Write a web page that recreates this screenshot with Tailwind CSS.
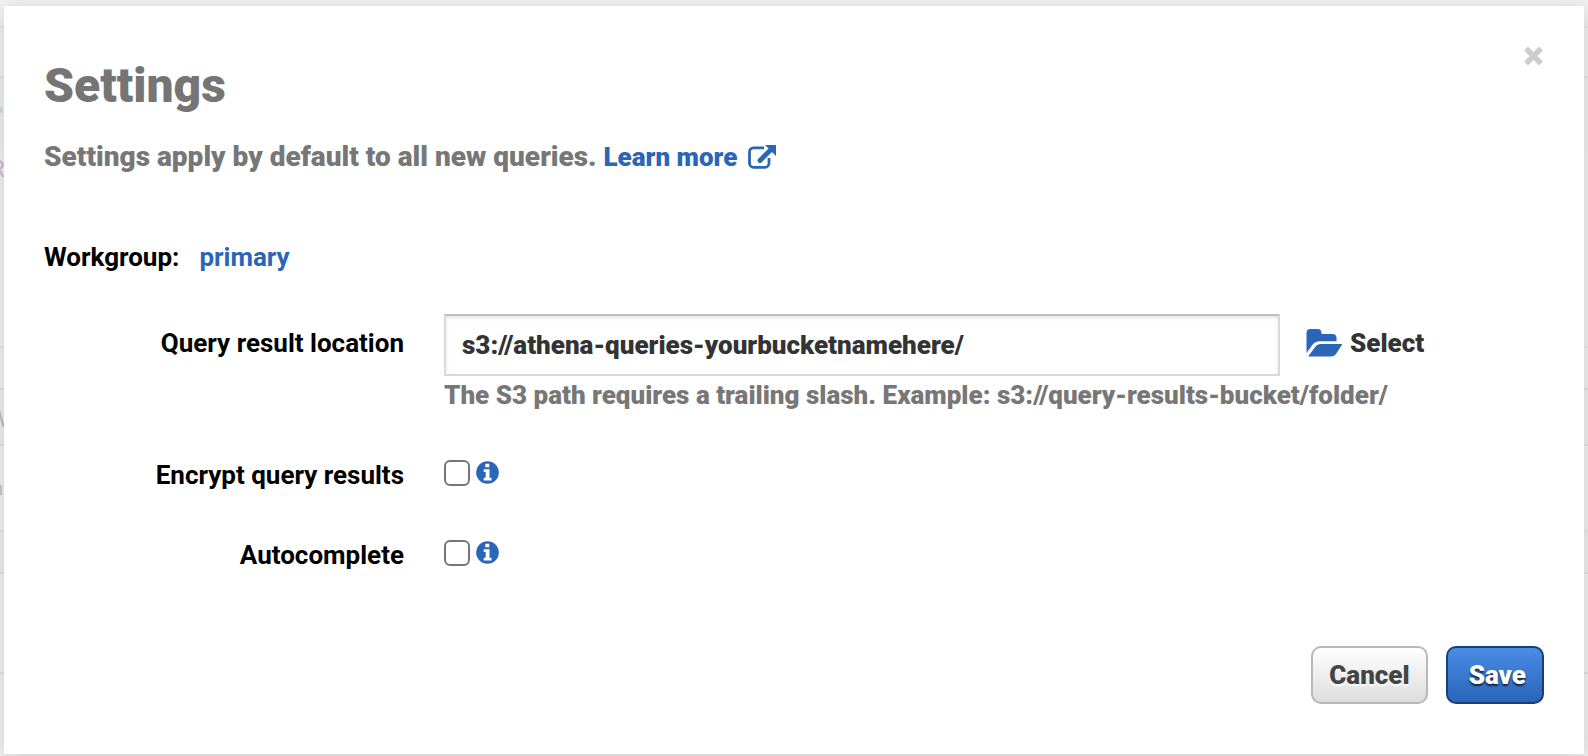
<!DOCTYPE html>
<html lang="en">

<head>
  <meta charset="UTF-8">
  <meta name="viewport" content="width=device-width, initial-scale=1.0">
  <title>Settings</title>
  <script src="https://cdn.jsdelivr.net/npm/@tailwindcss/browser@4"></script>
</head>

<body class="relative min-h-screen overflow-hidden bg-[#f2f2f2] px-1 pt-1.5 pb-0.5 font-['Roboto','Liberation_Sans',sans-serif] text-[26px] leading-8 font-bold text-black">

  <!-- Page behind the dialog -->
  <div class="absolute inset-0 overflow-hidden" aria-hidden="true">
    <div class="h-7 border-b-2 border-[#e8e8e8]"></div>
    <div class="h-[50px] border-b-2 border-[#e6e6e6]"></div>
    <div class="flex h-[68px] items-center bg-[#efefef]"><span class="-mt-1 h-1.5 w-[3px] rounded-r-sm bg-[#c5dcee]"></span></div>
    <div class="h-[202px] border-b-2 border-[#e8e8e8] pt-1.5"><span class="-ml-2.5 text-2xl font-normal text-[#d5b8dc]">R</span></div>
    <div class="h-[42px] border-b-2 border-[#e2e2e2]"></div>
    <div class="h-14 border-b-2 border-[#e2e2e2] bg-[#efefef] pt-3"><span class="-ml-3 text-2xl font-normal text-[#bcbcbc]">W</span></div>
    <div class="h-[86px] border-b-2 border-[#e6e6e6] pt-6"><span class="-ml-2 text-xl font-normal text-[#c4c4c4]">n</span></div>
    <div class="h-[42px] border-b-2 border-[#e2e2e2] bg-[#efefef]"></div>
    <div class="h-[100px] border-b-2 border-[#e2e2e2]"></div>
  </div>

  <!-- Settings dialog -->
  <div role="dialog" aria-labelledby="dialog-title" class="relative bg-white px-10 pt-[52px] pb-[50px] shadow-[0_4px_20px_rgba(0,0,0,0.16)]">
    <button type="button" aria-label="Close" class="absolute top-10 right-10 cursor-pointer">
      <svg class="size-5" viewBox="0 0 20 20" fill="none" stroke="#cccccc" stroke-width="5.6">
        <path d="M2 2.500l15 15M17 2.500L2 17.500" />
      </svg>
    </button>

    <h1 id="dialog-title" class="text-5xl leading-14 font-black text-[#757575]">Settings</h1>
    <p class="mt-[27px] text-[28px] leading-8 font-black text-[#777777]">
      Settings apply by default to all new queries.
      <a href="#" class="text-[26px] text-[#2a65b8]">Learn more
        <svg class="mb-1 ml-1 inline-block h-6 w-7" viewBox="0 0 28 24" fill="none">
          <path d="M16 2.800H5.500a4 4 0 0 0-4 4v11.500a4 4 0 0 0 4 4H17a4 4 0 0 0 4-4V13" stroke="#2a65b8" stroke-width="2.8" />
          <path d="M12 15.500L23 4.500" stroke="#2a65b8" stroke-width="4.8" stroke-linecap="round" />
          <path d="M17 0H28v11z" fill="#2a65b8" />
        </svg></a>
    </p>

    <form>
      <div class="mt-[68px] flex gap-5">
        <span>Workgroup:</span>
        <a href="#" class="text-[#2a65b8]">primary</a>
      </div>

      <div class="mt-[41px] grid grid-cols-[360px_1fr_264px]">
        <label for="location" class="pt-[13px] text-right">Query result location</label>
        <input id="location" type="text" value="s3://athena-queries-yourbucketnamehere/"
          class="ml-10 h-[62px] border-2 border-[#d9d9d9] border-t-[#bfbfbf] bg-white px-4 font-black text-[#333333] shadow-[inset_0_2px_4px_rgba(0,0,0,0.1)]">
        <button type="button" class="ml-[26px] flex h-[58px] cursor-pointer items-center gap-2 font-black text-[#333333]">
          <svg class="h-7 w-9" viewBox="0 0 36 28" fill="#2a65b8">
            <path d="M0.500 24V4a4 4 0 0 1 4-4h7a4 4 0 0 1 4 4v1h11a4 4 0 0 1 4 4v3.200H14c-3.500 0-5.500 1.200-7.500 3.600z" />
            <path d="M2.200 27.500L9.500 17.600c1.200-1.700 2.900-2.600 5-2.600H36.500l-6.200 9.500c-1.300 2-3 3-5.300 3z" />
          </svg>
          Select
        </button>
        <p class="col-span-2 col-start-2 mt-[3px] ml-10 font-black text-[#777777]">The S3 path requires a trailing slash. Example: s3://query-results-bucket/folder/</p>
      </div>

      <div class="mt-12 flex">
        <label for="encrypt" class="w-[360px] text-right">Encrypt query results</label>
        <input id="encrypt" type="checkbox" class="mt-px ml-10 size-[26px] appearance-none rounded-md border-2 border-[#767676] bg-white checked:bg-[#2a65b8]">
        <svg class="mt-0.5 ml-1.5 size-[23px]" viewBox="0 0 23 23">
          <circle cx="11.500" cy="11.500" r="11.300" fill="#2a65b8" />
          <path d="M9.300 2.800h4v3.500h-4zM7.700 8.200h5.800v8.600h2v2.700H7.700v-2.700h2v-5.900h-2z" fill="#ffffff" />
        </svg>
      </div>

      <div class="mt-12 flex">
        <label for="autocomplete" class="w-[360px] text-right">Autocomplete</label>
        <input id="autocomplete" type="checkbox" class="mt-px ml-10 size-[26px] appearance-none rounded-md border-2 border-[#767676] bg-white checked:bg-[#2a65b8]">
        <svg class="mt-0.5 ml-1.5 size-[23px]" viewBox="0 0 23 23">
          <circle cx="11.500" cy="11.500" r="11.300" fill="#2a65b8" />
          <path d="M9.300 2.800h4v3.500h-4zM7.700 8.200h5.800v8.600h2v2.700H7.700v-2.700h2v-5.900h-2z" fill="#ffffff" />
        </svg>
      </div>

      <div class="mt-[75px] flex justify-end gap-[18px]">
        <button type="button" class="h-[58px] cursor-pointer rounded-[10px] border-2 border-[#b8b8b8] bg-linear-to-b from-white to-[#dddddd] px-4 font-black text-[#444444] [text-shadow:0_2px_2px_#ffffff]">Cancel</button>
        <button type="submit" class="h-[58px] cursor-pointer rounded-[10px] border-2 border-[#1a3f78] bg-linear-to-b from-[#4a8de5] to-[#2a65b8] pr-4 pl-[21px] font-black text-white [text-shadow:0_2px_2px_rgba(0,0,0,0.7)]">Save</button>
      </div>
    </form>
  </div>
</body>

</html>
